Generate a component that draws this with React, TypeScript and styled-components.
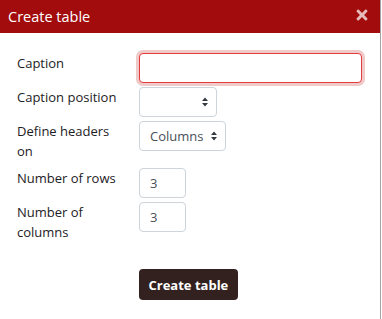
import styled, { createGlobalStyle } from 'styled-components';
import { FaTimes } from 'react-icons/fa';

const GlobalStyle = createGlobalStyle`
  body {
    margin: 0;
    font-family: 'Open Sans', 'Liberation Sans', sans-serif;
    background: #fff;
  }
`;

const Caret = () => (
  <svg width="6" height="10" viewBox="0 0 6 10">
    <path d="M0 4 L3 0.5 L6 4 Z M0 6 L3 9.5 L6 6 Z" fill="#343a40" />
  </svg>
);

export default function App() {
  return (
    <>
      <GlobalStyle />
      <Dialog>
        <Header>
          <Title>Create table</Title>
          <CloseButton aria-label="Close">
            <FaTimes size={16} />
          </CloseButton>
        </Header>
        <Body>
          <Row>
            <Label>Caption</Label>
            <TextInput $width={223} $focused />
          </Row>
          <Row>
            <Label>Caption position</Label>
            <FakeSelect $width={78}>
              <span />
              <Caret />
            </FakeSelect>
          </Row>
          <Row>
            <Label>Define headers on</Label>
            <FakeSelect $width={87}>
              <span>Columns</span>
              <Caret />
            </FakeSelect>
          </Row>
          <Row>
            <Label>Number of rows</Label>
            <TextInput $width={47} defaultValue="3" />
          </Row>
          <Row>
            <Label>Number of columns</Label>
            <TextInput $width={47} defaultValue="3" />
          </Row>
          <Actions>
            <SubmitButton>Create table</SubmitButton>
          </Actions>
        </Body>
      </Dialog>
    </>
  );
}

const Dialog = styled.div`
  width: 380px;
  height: 319px;
  border-right: 1px solid #a3a3a3;
  background: #fff;
`;

const Header = styled.div`
  display: flex;
  align-items: center;
  justify-content: space-between;
  height: 33px;
  padding: 0 10px 0 8px;
  background: #a20c0c;
`;

const Title = styled.h1`
  margin: 0;
  font-size: 14.5px;
  font-weight: 400;
  color: #fff;
`;

const CloseButton = styled.button`
  display: flex;
  align-items: center;
  padding: 0;
  margin-top: -4px;
  border: none;
  background: none;
  color: rgba(255, 255, 255, 0.72);
`;

const Body = styled.div`
  display: flex;
  flex-direction: column;
  gap: 4px;
  padding: 20px 0 0 17px;
`;

const Row = styled.div`
  display: flex;
  align-items: flex-start;
`;

const Label = styled.label`
  box-sizing: border-box;
  width: 122px;
  padding: 0 20px 3px 0;
  font-size: 13px;
  line-height: 20px;
  color: #1d2125;
`;

const TextInput = styled.input<{ $width: number; $focused?: boolean }>`
  box-sizing: border-box;
  width: ${(p) => p.$width}px;
  height: 30px;
  padding: 0 10px;
  border: 1px solid ${(p) => (p.$focused ? '#e23c3c' : '#ced4da')};
  border-radius: 4px;
  box-shadow: ${(p) => (p.$focused ? '0 0 0 3px rgba(200, 60, 60, 0.28)' : 'none')};
  font-family: inherit;
  font-size: 13px;
  color: #495057;
  outline: none;
`;

const FakeSelect = styled.div<{ $width: number }>`
  box-sizing: border-box;
  display: flex;
  align-items: center;
  justify-content: space-between;
  width: ${(p) => p.$width}px;
  height: 30px;
  padding: 0 8px 0 10px;
  border: 1px solid #ced4da;
  border-radius: 4px;
  font-size: 13px;
  color: #495057;
`;

const Actions = styled.div`
  padding: 20px 0 0 122px;
`;

const SubmitButton = styled.button`
  height: 31px;
  padding: 0 9.5px;
  border: none;
  border-radius: 4px;
  background: #33211f;
  color: #fff;
  font-family: inherit;
  font-size: 13px;
  font-weight: 700;
`;
